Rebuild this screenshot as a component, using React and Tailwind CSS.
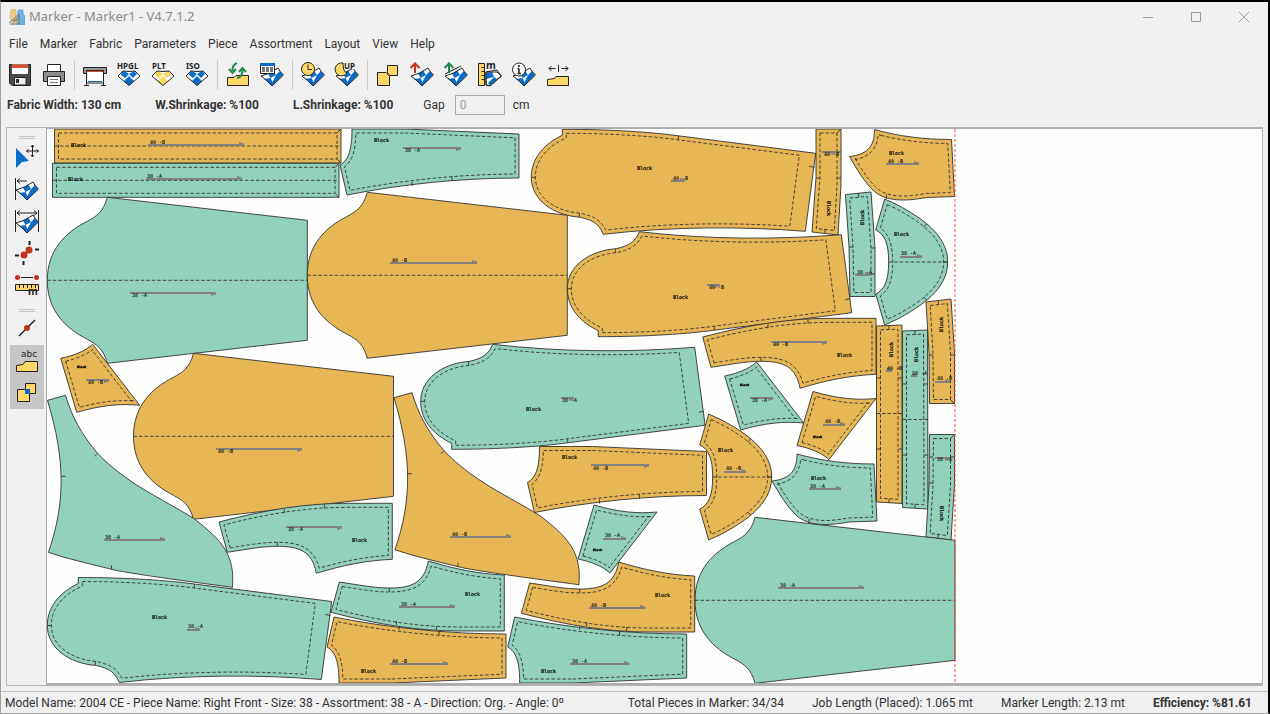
const GREEN = '#92d1bc';
const ORANGE = '#e8b755';

// Turns an absolute M/L/C path into a list of edges, each tagged with its command index
function flatten(d) {
    const commands = d.match(/[MLC][^MLCZ]*/g);
    const points = [];
    commands.forEach((command, index) => {
        const n = command.slice(1).trim().split(/[\s,]+/).map(Number);
        if (command[0] !== 'C') {
            points.push({x: n[0], y: n[1], index});
            return;
        }
        const p = points[points.length - 1];
        for (let i = 1; i <= 10; i++) {
            const t = i / 10;
            const u = 1 - t;
            points.push({
                x: u * u * u * p.x + 3 * u * u * t * n[0] + 3 * u * t * t * n[2] + t * t * t * n[4],
                y: u * u * u * p.y + 3 * u * u * t * n[1] + 3 * u * t * t * n[3] + t * t * t * n[5],
                index,
            });
        }
    });
    return points.filter((p, i) => {
        const q = points[(i + points.length - 1) % points.length];
        return Math.hypot(p.x - q.x, p.y - q.y) > 0.01;
    });
}

// Sewing line: the outline moved inwards by the seam allowance
function seamLine(d, hem) {
    const points = flatten(d);
    const count = points.length;
    let area = 0;
    points.forEach((p, i) => {
        const q = points[(i + 1) % count];
        area += p.x * q.y - q.x * p.y;
    });
    const side = area > 0 ? 1 : -1;
    const edges = points.map((p, i) => {
        const q = points[(i + 1) % count];
        const length = Math.hypot(q.x - p.x, q.y - p.y);
        const dx = (q.x - p.x) / length;
        const dy = (q.y - p.y) / length;
        const margin = q.index === hem ? 16 : 4;
        return {x: p.x - dy * margin * side, y: p.y + dx * margin * side, dx, dy};
    });
    const inner = edges.map((e, i) => {
        const prev = edges[(i + count - 1) % count];
        const cross = prev.dx * e.dy - prev.dy * e.dx;
        if (Math.abs(cross) < 0.02) return [e.x, e.y];
        const t = ((e.x - prev.x) * e.dy - (e.y - prev.y) * e.dx) / cross;
        return [prev.x + prev.dx * t, prev.y + prev.dy * t];
    });
    return 'M' + inner.map((p) => p[0].toFixed(1) + ' ' + p[1].toFixed(1)).join('L') + 'Z';
}

const SHAPES = {
    sleeve: {
        d: 'M60 -83 L260 -60 L260 60 L60 83 C56 68 49 64 40 59 C18 48 0 30 0 0 C0 -30 18 -48 40 -59 C49 -64 56 -68 60 -83 Z',
        fold: 'M0 0H260',
    },
    leg: {
        d: 'M0 0 C50 0 90 3 116 6.5 L253.4 24 L243 102 C180 97 110 97 41 105 C37 95 31 91 18 88 C-10 86 -31 70 -31 48 C-31 28 -17 14 0 6 Z',
        ticks: 'M116 6.5v4M-31 48h4M17 88v-4M252 38l-5 -1',
        seam: true,
        hem: 3,
    },
    back: {
        d: 'M0 0 L53 0 L167 5 L167 49 C110 49 50 55 -5 66 L-12 36 C-3 31 0 20 0 0 Z',
        ticks: 'M100 52v-4M60 57v-4',
        seam: true,
    },
    front: {
        d: 'M0 0 C20 3 35 6 50 6 C72 6 85 1 89 -21 C115 -13 140 -8 165 -7 L165 49 L120 49 C80 49 40 43 -8.3 30.3 Z',
        ticks: 'M50 6v4M57 43v-4M97 48v-4',
        seam: true,
    },
    crescent: {
        d: 'M0 -63 L13 -57 C35 -45 63 -28 63 0 C63 28 35 45 13 57 L0 63 L-9 32 C0 28 4 18 4 0 C4 -18 0 -28 -9 -32 Z',
        ticks: 'M42 -38l-3 3M42 38l-3 -3M63 0h-4',
        fold: 'M4 0H63',
        seam: true,
    },
    hip: {
        d: 'M0 0 C25 7 50 10 77 10 L80 67 L52 68 C30 72 12 72 0 62 C-10 53 -18 39 -25 27 C-8 25 0 18 0 0 Z',
        ticks: 'M12 69v-4',
        seam: true,
    },
    pocket: {d: 'M0 0 C14 -3 24 -7 32 -14 L79 47 C60 45 40 47 16 54 Z', seam: true},
    flare: {
        d: 'M0 0 L18 -5 C24 15 33 33 50 53 C80 84 112 97 146 118 C165 133 180 145 184 166 C186 175 185 182 185 187 C140 181 80 173 64 169 C40 163 18 158 1 152 C18 102 18 60 0 0 Z',
        ticks: 'M50 53l-3 3M14 76h4M64 169v-4',
    },
    belt: {d: 'M0 0 L286.5 0 L286.5 34 L0 34 Z', fold: 'M0 17H286', ticks: 'M286.5 0l-4 4M286.5 34l-4 -4', seam: true},
    bandA: {d: 'M816 129 L841 129 L841 185 L838 235 L812 232 L816 177 Z', ticks: 'M841 129l-4 4M841 152h-4M816 178h4M841 178h-4M825 233v-4', seam: true},
    bandB: {d: 'M845.5 194.5 L871 192 L875 248 L875 296.5 L850 296.5 L849 247 Z', ticks: 'M858 193l1 4M849 247h4M875 248h-4M875 274h-4', seam: true},
    bandC: {d: 'M876.5 326 L902 325 L902 503.5 L876.5 502 Z', fold: 'M876.5 413.5H902', ticks: 'M889 325v4M876.5 378h4M902 378h-4M876.5 449h4M902 449h-4M889 503v-4', seam: true},
    bandD: {d: 'M902.5 331 L927.5 330 L928 509 L902.5 507.5 Z', fold: 'M902.5 419.5H928', ticks: 'M915 331v4M902.5 384h4M928 384h-4M902.5 455h4M928 455h-4M915 508v-4', seam: true},
    bandE: {d: 'M926 302 L951 299 L954.5 353 L954.5 403.5 L929.5 403.5 L929 353 Z', ticks: 'M938 301l1 4M929 355h4M954 355h-4M954 403l-4 -4', seam: true},
    bandF: {d: 'M929.5 434.5 L954.5 434.5 L954.5 485 L951 540 L926 537 L929 485 Z', ticks: 'M954 435l-4 4M929 457h4M954 457h-4M929 483h4M938 538v-4', seam: true},
};

// [shape, size, x, y, flipped]
const PIECES = [
    ['belt', 40, 54.5, 129, false],
    ['belt', 38, 52.5, 163.3, false],
    ['back', 38, 352, 129, false],
    ['leg', 40, 562.3, 129.3, false],
    ['bandA', 40, 0, 0, false],
    ['hip', 40, 874.5, 129.5, false],
    ['sleeve', 38, 47.3, 280.3, false],
    ['sleeve', 40, 307.3, 275.3, false],
    ['leg', 40, 598.3, 336.7, true],
    ['bandB', 38, 0, 0, false],
    ['crescent', 38, 884.7, 262, false],
    ['front', 40, 711, 367.3, true],
    ['bandC', 40, 0, 0, false],
    ['bandD', 38, 0, 0, false],
    ['bandE', 40, 0, 0, false],
    ['bandF', 38, 0, 0, false],
    ['leg', 38, 451.7, 449.3, true],
    ['sleeve', 40, 133.5, 436.3, false],
    ['pocket', 40, 60.7, 358.3, false],
    ['flare', 38, 47.5, 400.3, false],
    ['flare', 40, 394, 397.7, false],
    ['pocket', 38, 724.7, 376, false],
    ['pocket', 40, 797, 445.5, true],
    ['back', 40, 539.5, 446.5, false],
    ['crescent', 40, 708.7, 477, false],
    ['hip', 38, 797, 454, false],
    ['front', 38, 227.3, 552.3, true],
    ['pocket', 38, 578, 559, true],
    ['sleeve', 38, 695, 600.3, false],
    ['leg', 38, 78.3, 577.5, false],
    ['front', 38, 339.3, 582, false],
    ['front', 40, 529.7, 583, false],
    ['back', 40, 339, 683, true],
    ['back', 38, 519.7, 683, true],
];

// [size, text x, text y, arrow start, arrow end, arrow y, head side]
const GRAINS = [
    [40, 150, 144, 148, 244, 145, -1],
    [38, 147, 178, 146, 242, 179, -1],
    [38, 405, 152, 403, 461, 148, 1],
    [40, 673, 180, 671, 685, 181, -1],
    [40, 392, 262, 390, 477, 263, -1],
    [38, 132, 297, 130, 216, 293, 1],
    [40, 709, 289, 707, 720, 285, 1],
    [40, 824, 156, 822, 836, 152, 1],
    [38, 857, 274, 855, 870, 275, -1],
    [40, 888, 163, 886, 919, 164, -1],
    [38, 901, 255, 900, 922, 257, -1],
    [40, 773, 346, 771, 827, 342, 1],
    [40, 887, 370, 886, 892, 371, -1],
    [38, 912, 375, 911, 917, 376, -1],
    [40, 937, 380, 935, 950, 382, -1],
    [38, 937, 461, 935, 950, 458, 1],
    [40, 88, 384, 86, 109, 380, 1],
    [38, 105, 539, 104, 165, 540, -1],
    [40, 218, 453, 216, 302, 449, 1],
    [38, 288, 531, 286, 342, 527, 1],
    [38, 562, 402, 561, 574, 398, 1],
    [40, 593, 470, 591, 649, 465, 1],
    [40, 452, 536, 450, 511, 537, -1],
    [38, 605, 537, 603, 626, 539, -1],
    [38, 752, 402, 750, 773, 398, 1],
    [40, 825, 423, 823, 845, 425, -1],
    [40, 726, 470, 724, 746, 472, -1],
    [38, 810, 488, 809, 841, 489, -1],
    [38, 780, 587, 778, 864, 588, -1],
    [38, 188, 628, 187, 200, 630, -1],
    [38, 401, 606, 399, 455, 607, -1],
    [40, 591, 607, 589, 645, 608, -1],
    [40, 392, 663, 390, 448, 664, -1],
    [38, 572, 663, 570, 629, 664, -1],
];

// [x, y, rotation]
const BLOCKS = [
    [71, 147, 0], [68, 181, 0], [374, 142, 0], [637, 170, 0], [673, 299, 0],
    [889, 155, 0], [837, 357, 0], [352, 542, 0], [526, 411, 0],
    [562, 459, 0], [718, 452, 0], [811, 480, 0], [152, 619, 0], [465, 596, 0],
    [655, 597, 0], [361, 673, 0], [541, 673, 0], [894, 236, 0],
    [827, 201, 90], [864, 225, -90], [893, 357, -90], [918, 362, -90], [943, 332, -90], [940, 506, 90],
];

const TINY_BLOCKS = [[77, 368], [740, 386], [813, 438], [593, 551]];

function Piece({shape, size, x, y, flipped}) {
    const {d, ticks, fold, seam, hem} = SHAPES[shape];
    return (
        <g transform={`translate(${x} ${y}) scale(1 ${flipped ? -1 : 1})`} fill="none" stroke="#333" strokeWidth="0.9">
            <path d={d} fill={size === 40 ? ORANGE : GREEN} />
            {seam && <path d={seamLine(d, hem)} strokeDasharray="3.5 2" />}
            {fold && <path d={fold} strokeDasharray="3.5 2" />}
            {ticks && <path d={ticks} />}
        </g>
    );
}

function MarkerDrawing() {
    return (
        <svg className="h-[554px] w-[911px] shrink-0" viewBox="47 129 911 554" fontFamily='"DejaVu Sans Mono", monospace'>
            {PIECES.map(([shape, size, x, y, flipped], i) => (
                <Piece key={i} shape={shape} size={size} x={x} y={y} flipped={flipped} />
            ))}
            {GRAINS.map(([size, tx, ty, x1, x2, y, side], i) => (
                <g key={i}>
                    <path d={`M${x1} ${y}H${x2}`} stroke="#84807f" strokeWidth="2" />
                    <path d={`M${x2 + 1} ${y + side}l-6 ${side * 2}v${-side * 3}z`} fill="#84807f" />
                    <text x={tx} y={ty} fontSize="5" fill="#111" stroke="#111" strokeWidth="0.1">{size === 40 ? '40 -B' : '38 -A'}</text>
                </g>
            ))}
            {BLOCKS.map(([x, y, angle], i) => (
                <text key={i} transform={`translate(${x} ${y}) rotate(${angle})`} fontSize="5" fill="#000" stroke="#000" strokeWidth="0.2">Block</text>
            ))}
            {TINY_BLOCKS.map(([x, y], i) => (
                <text key={i} x={x} y={y} fontSize="3" fontWeight="bold" fill="#000" stroke="#000" strokeWidth="0.3">Block</text>
            ))}
            <path d="M955 129V683" stroke="#ff4a3d" strokeWidth="1" strokeDasharray="3 2" />
        </svg>
    );
}

function Icon({children}) {
    return (
        <svg className="size-6 overflow-visible" viewBox="0 0 24 24" fill="none" stroke="#222" fontFamily='"Noto Sans", sans-serif' fontWeight="bold" aria-hidden="true">
            {children}
        </svg>
    );
}

function Diamond({color = '#0b6cc9'}) {
    return (
        <g>
            <path d="M1 13L6 8H18L23 13L12 22.5Z" fill="#fff" stroke="none" />
            <path d="M5 9L7 8L12 11L8 15L4 12Z M12 11L17 8L20 11L16 15Z M7 18L12 13L17 18L12 22.5Z" fill={color} stroke="none" />
            <path d="M1 13L6 8Q12 9 18 8L23 13L12 22.5Z" />
        </g>
    );
}

function TiltedDiamond() {
    return (
        <g>
            <path d="M1 13L18 5L23.500 12L12 23Z" fill="#fff" stroke="none" />
            <path d="M8 10.500L13 7.500L16 12L10.500 15Z M16 12L20 8L23 12L19 16Z M4 16L10.500 15L12.500 19L9 20Z M12.500 19L16 12L19 16L12 23L9 20Z" fill="#0b6cc9" stroke="none" />
            <path d="M1 13Q10 11 18 5Q20 9 23.500 12L12 23Q7 17 1 13Z" />
        </g>
    );
}

const TOOL_GROUPS = [
    [
        {name: 'Save', icon: <>
            <path d="M1.500 1.500H22.500V22.500H4L1.500 20Z" fill="#4a4a48" />
            <path d="M4 1.500H20V11H4Z" fill="#fff" stroke="none" />
            <path d="M4 1.500H20V5H4Z" fill="#d8502c" stroke="none" />
            <path d="M6.500 14.500H18V22H6.500Z" fill="#efeee6" />
            <path d="M8 16H11V20H8Z" fill="#333" stroke="none" />
        </>},
        {name: 'Print', icon: <>
            <path d="M5.500 9V1.500H18.500V9" fill="#fff" />
            <path d="M1.500 8.500H22.500V18.500H1.500Z" fill="#8d8d8d" />
            <path d="M5.500 13.500H18.500V22.500H5.500Z" fill="#fff" />
            <path d="M8 16.500H16M8 19.500H16" stroke="#777" />
        </>},
    ],
    [
        {name: 'Plotter', icon: <>
            <path d="M.5 4.500H23.500V10.500H20.500V22.500M.5 4.500V10.500H3.500V22.500M1 22.500H6M18 22.500H23" fill="none" />
            <path d="M1 5H23V10H1Z" fill="#999" stroke="none" />
            <path d="M3.500 7.500H20.500V20H3.500Z" fill="#fff" />
            <path d="M4 8.500H20" stroke="#d8502c" />
            <path d="M5 18.500H19" stroke="#0b6cc9" />
        </>},
        {name: 'HPGL', icon: <><Diamond /><text x="0" y="6" fontSize="8" fill="#222" stroke="none">HPGL</text></>},
        {name: 'PLT', icon: <><Diamond color="#ffd45c" /><text x="1" y="6" fontSize="8" fill="#222" stroke="none">PLT</text></>},
        {name: 'ISO', icon: <><Diamond /><text x="1" y="6" fontSize="8" fill="#222" stroke="none">ISO</text></>},
    ],
    [
        {name: 'Update pieces', icon: <>
            <path d="M1.500 14.500H8L10 12.500H22.500V22.500H1.500Z" fill="#ffd766" />
            <g stroke="#1f8a4c" strokeWidth="2">
                <path d="M11 0Q6 2 6.500 8M3 6L6.500 10L10 6" />
                <path d="M11 15Q17 14 16.500 6M13 9L16.500 5L20 9" />
            </g>
        </>},
        {name: 'Size table', icon: <>
            <TiltedDiamond />
            <path d="M.5 .5H14.500V10.500H.5Z" fill="#fff" />
            <path d="M0 0H15V3H0Z" fill="#0b6cc9" stroke="none" />
            <path d="M2 4H5V9H2ZM6 4H9V9H6ZM10 4H13V9H10Z" fill="#777" stroke="none" />
        </>},
    ],
    [
        {name: 'Timed nesting', icon: <>
            <TiltedDiamond />
            <circle cx="7" cy="6" r="6.500" fill="#ffd766" />
            <path d="M7 1.500V6.500H11" />
        </>},
        {name: 'Nest up', icon: <>
            <TiltedDiamond />
            <path d="M8 0A6.500 6.500 0 1 0 12 10Q8 9 8 0Z" fill="#ffd766" />
            <path d="M9 -1H21V6H9Z" fill="#f0f0f0" stroke="none" />
            <text x="9" y="6" fontSize="8" fill="#222" stroke="none">UP</text>
        </>},
    ],
    [
        {name: 'Pieces', icon: <>
            <path d="M11.500 2.500H21.500V12.500H14L11.500 10Z" fill="#ffd766" />
            <path d="M1.500 9.500H10L13.500 13V22.500H1.500Z" fill="#ffd766" />
        </>},
        {name: 'Remove piece', icon: <><TiltedDiamond /><path d="M5 10V1M0.500 5L5 0.500L9.500 5" stroke="#c0341d" strokeWidth="2" /></>},
        {name: 'Remove all', icon: <><TiltedDiamond /><path d="M1 11L17 3" /><path d="M5 10V1M0.500 5L5 0.500L9.500 5" stroke="#1f8a4c" strokeWidth="2" /></>},
        {name: 'Measure', icon: <>
            <path d="M8 9L19 7L23 13L12 22.500L8 22Z" fill="#fff" />
            <path d="M8 10L14 9L16 14L8 16ZM10 20L16 14L19 16L12 22.500Z" fill="#0b6cc9" stroke="none" />
            <path d="M8 9L19 9L23.500 13L12 23L8 22Z" />
            <path d="M.5 .5H6.500V22.500H.5Z" fill="#ffd766" />
            <path d="M3.500 4.500H6M3.500 8.500H6M3.500 12.500H6M3.500 16.500H6" />
            <text x="8" y="6" fontSize="10" fill="#222" stroke="none">m</text>
        </>},
        {name: 'Information', icon: <>
            <TiltedDiamond />
            <circle cx="7" cy="6.500" r="6.500" fill="#fff" />
            <path d="M7 5.500V11M5.500 10.500H9M5.500 5.500H7M7 2V4" strokeWidth="1.500" />
        </>},
        {name: 'Piece gap', icon: <>
            <path d="M1.500 22.500V16.500L8.500 15.500L10 13.500H22.500V22.500Z" fill="#ffd766" />
            <path d="M12.500 2V9M9.500 5.500H3M5.500 3L3 5.500L5.500 8M15.500 5.500H22M19.500 3L22 5.500L19.500 8" />
        </>},
    ],
];

const SIDE_TOOLS = [
    {name: 'Move', icon: <>
        <path d="M1 3L14 16L7 17L1 23Z" fill="#0b6cc9" stroke="none" />
        <path d="M17.500 0V12M11.500 6H23.500M16 2L17.500 0L19 2M16 10L17.500 12L19 10M13.500 4.500L11.500 6L13.500 7.500M21.500 4.500L23.500 6L21.500 7.500" />
    </>},
    {name: 'Slide left', icon: <><TiltedDiamond /><path d="M.5 1V23M12 4H2M5 1.500L2 4L5 6.500" /></>},
    {name: 'Slide between', icon: <><g transform="translate(0 1)"><TiltedDiamond /></g><path d="M.5 1V23M23.500 1V23M2 4H22M5 1.500L2 4L5 6.500M19 1.500L22 4L19 6.500" /></>},
    {name: 'Join notches', icon: <>
        <path d="M14.500 0V4M20 8.500H24M0 14.500H4M8.500 20V24" strokeWidth="2" />
        <path d="M9 14L14 9" stroke="#c0341d" strokeWidth="2" />
        <circle cx="14" cy="9" r="3.500" fill="#c0341d" stroke="none" />
        <circle cx="9" cy="14" r="3.500" fill="#c0341d" stroke="none" />
    </>},
    {name: 'Measure distance', icon: <>
        <path d="M6 4.500H18" />
        <circle cx="2.500" cy="4.500" r="2.500" fill="#c0341d" stroke="none" />
        <circle cx="21.500" cy="4.500" r="2.500" fill="#c0341d" stroke="none" />
        <path d="M.5 11.500H23.500V17.500H.5Z" fill="#ffd766" />
        <path d="M4.500 12V15M8.500 12V15M12.500 12V15M16.500 12V15M20.500 12V15" />
        <text x="13" y="22" fontSize="10" fill="#222" stroke="none">m</text>
    </>},
];

const VIEW_TOOLS = [
    {name: 'Show labels', icon: <>
        <text x="6" y="8" fontSize="9" fontWeight="normal" fontFamily='"DejaVu Sans", sans-serif' fill="#222" stroke="none">abc</text>
        <path d="M1.500 22.500V16.500L8 15.500L10 12.500H22.500V22.500Z" fill="#ffd766" />
    </>},
    {name: 'Show overlaps', icon: <>
        <path d="M10.500 2.500H20.500V12.500H10.500Z" fill="#ffd766" />
        <path d="M2.500 8.500H14.500V20.500H2.500Z" fill="#ffd766" />
        <path d="M10 8H15V13H10Z" fill="#0b6cc9" stroke="none" />
    </>},
];

const MENUS = ['File', 'Marker', 'Fabric', 'Parameters', 'Piece', 'Assortment', 'Layout', 'View', 'Help'];

function ToolButton({tool, pressed}) {
    return (
        <button
            type="button"
            aria-label={tool.name}
            aria-pressed={pressed}
            className="flex h-8 w-[34px] items-center justify-center"
        >
            <Icon>{tool.icon}</Icon>
        </button>
    );
}

function TitleBar() {
    return (
        <header className="flex h-[29px] items-center pl-2 text-[#8a8a8a]">
            <svg className="size-4" viewBox="0 0 16 16" aria-hidden="true">
                <path d="M9 1L14 1V5L16 7V16H8Z" fill="#6fb3e8" stroke="#4a8fc4" strokeWidth=".6" />
                <path d="M2 1Q5 -1 7 1V9L10 12L4 16L1 8Z" fill="#f0c98c" stroke="#d9a45c" strokeWidth=".6" />
                <path d="M0 14L10 5V15H1M4 12H8V9Z" fill="none" stroke="#777" />
            </svg>
            <h1 className="ml-1 flex-1 font-['Noto_Sans',sans-serif] text-[13px]">Marker - Marker1 - V4.7.1.2</h1>
            <button type="button" aria-label="Minimize" className="flex w-12 justify-center">
                <svg className="size-3" viewBox="0 0 12 12" fill="none" stroke="#999"><path d="M1 6.500H11" /></svg>
            </button>
            <button type="button" aria-label="Maximize" className="flex w-12 justify-center">
                <svg className="size-3" viewBox="0 0 12 12" fill="none" stroke="#999"><path d="M1.500 1.500H10.500V10.500H1.500Z" /></svg>
            </button>
            <button type="button" aria-label="Close" className="flex w-12 justify-center">
                <svg className="size-3" viewBox="0 0 12 12" fill="none" stroke="#999"><path d="M1 1L11 11M11 1L1 11" /></svg>
            </button>
        </header>
    );
}

function Grip() {
    return <div className="mx-auto h-[3px] w-4 border-y border-[#c4c4c4]" />;
}

export default function App() {
    return (
        <div className="flex min-h-screen flex-col border-t-2 border-r-2 border-b border-l border-t-black border-r-black border-b-[#a0a0a0] border-l-[#a0a0a0] bg-[#f0f0f0] font-[Roboto,sans-serif] text-xs text-[#333]">
            <TitleBar />

            <nav className="mb-0.5 flex h-[25px] items-center gap-3 pl-2">
                {MENUS.map((menu) => (
                    <button key={menu} type="button">{menu}</button>
                ))}
            </nav>

            <div className="flex h-[34px] items-center pl-[2px]">
                {TOOL_GROUPS.map((group, i) => (
                    <div key={i} className="flex items-center">
                        {i > 0 && <div className="mx-[3px] h-[30px] w-px bg-[#c8c8c8]" />}
                        {group.map((tool) => <ToolButton key={tool.name} tool={tool} />)}
                    </div>
                ))}
            </div>

            <div className="flex h-[35px] items-start gap-[34px] pt-[3px] pl-1.5 leading-5">
                <strong>Fabric Width: 130 cm</strong>
                <strong>W.Shrinkage: %100</strong>
                <strong>L.Shrinkage: %100</strong>
                <div className="-ml-1 flex">
                    <label htmlFor="gap" className="mr-2.5">Gap</label>
                    <input
                        id="gap"
                        defaultValue="0"
                        className="h-5 w-[50px] border border-[#a8a8a8] bg-transparent px-1 text-[#a0a0a0]"
                    />
                    <span className="ml-2">cm</span>
                </div>
            </div>

            <main className="mr-[5px] ml-[5px] flex flex-1 border border-[#b4b4b4]">
                <aside className="flex w-[39px] flex-col items-center pt-2">
                    <Grip />
                    <div className="pt-0.5">
                        {SIDE_TOOLS.map((tool) => <ToolButton key={tool.name} tool={tool} />)}
                    </div>
                    <div className="pt-2">
                        <Grip />
                        <ToolButton
                            tool={{name: 'Line point', icon: <>
                                <path d="M4 20L20 4" strokeWidth="1.500" />
                                <circle cx="12" cy="12" r="3" fill="#c0341d" stroke="none" />
                            </>}}
                        />
                    </div>
                    <div className="mt-px bg-[#c6c6c6]">
                        {VIEW_TOOLS.map((tool) => <ToolButton key={tool.name} tool={tool} pressed />)}
                    </div>
                </aside>
                <section className="min-w-0 flex-1 overflow-hidden border-t border-b-2 border-l border-[#adadad] bg-[#fefefd]">
                    <MarkerDrawing />
                </section>
            </main>

            <footer className="mt-[5px] flex h-[22px] items-center border-t border-[#c0c0c0] pr-4 pl-1">
                <span className="flex-1">
                    Model Name: 2004 CE - Piece Name: Right Front - Size: 38 - Assortment: 38 - A - Direction: Org. - Angle: 0º
                </span>
                <div className="flex gap-7">
                    <span>Total Pieces in Marker: 34/34</span>
                    <span>Job Length (Placed): 1.065 mt</span>
                    <span>Marker Length: 2.13 mt</span>
                    <strong>Efficiency: %81.61</strong>
                </div>
            </footer>
        </div>
    );
}
